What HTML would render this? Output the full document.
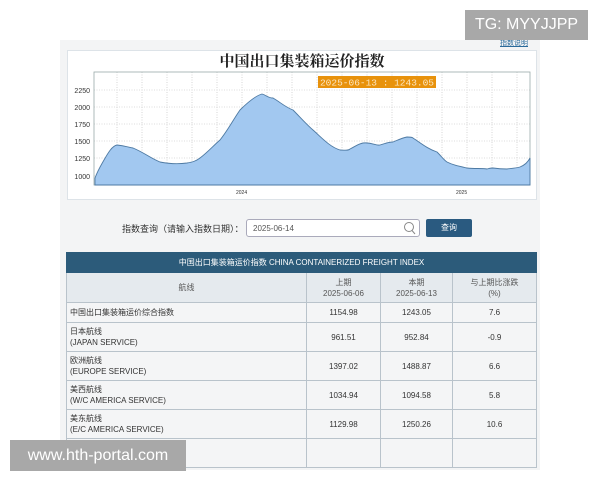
<!DOCTYPE html>
<html><head><meta charset="utf-8"><style>
*{margin:0;padding:0;box-sizing:border-box}
body{width:600px;height:480px;background:#fff;position:relative;overflow:hidden;font-family:"Liberation Sans","Noto Sans CJK SC",sans-serif;}
.abs{position:absolute}
.wrap{left:60px;top:40px;width:480px;height:440px;background:#f3f4f5}
.chart{left:67px;top:50px;width:470px;height:150px;background:#fff;border:1px solid #dde3e8}
table{position:absolute;left:66px;top:252px;width:471px;border-collapse:collapse;font-size:8px;color:#333;background:#f4f5f6}
td,th{border:1px solid #b9c3cb;font-weight:normal}
.hd td{background:#2c5b7a;color:#fff;text-align:center;height:20px;border-color:#2c5b7a}
.ch td{background:#e5eaee;color:#555;text-align:center;height:30px;line-height:11px}
.r td{height:29px;line-height:11px}
.r1 td{height:20px;line-height:11px}
td.n{text-align:center}
td.l{padding-left:3px}
</style></head><body>
<div class="abs wrap"></div>
<div class="abs" style="left:500px;top:38px;font-size:7px;color:#2a6a9a;text-decoration:underline">指数说明</div>
<div class="abs chart"></div>
<div class="abs" style="left:67px;top:50px;width:470px;text-align:center;font-size:15px;font-weight:bold;color:#222;font-family:'Liberation Serif','Noto Serif CJK SC',serif">中国出口集装箱运价指数</div>
<svg class="abs" style="left:0;top:0" width="600" height="210">
<g stroke="#bbb" stroke-dasharray="1,1.5" stroke-width="0.6">
<line x1="94" x2="530" y1="90" y2="90"/><line x1="94" x2="530" y1="107" y2="107"/><line x1="94" x2="530" y1="124" y2="124"/><line x1="94" x2="530" y1="141" y2="141"/><line x1="94" x2="530" y1="158" y2="158"/><line x1="94" x2="530" y1="176" y2="176"/>
<line x1="117" x2="117" y1="72" y2="185"/><line x1="142" x2="142" y1="72" y2="185"/><line x1="167" x2="167" y1="72" y2="185"/><line x1="192" x2="192" y1="72" y2="185"/><line x1="217" x2="217" y1="72" y2="185"/><line x1="242" x2="242" y1="72" y2="185"/><line x1="267" x2="267" y1="72" y2="185"/><line x1="292" x2="292" y1="72" y2="185"/><line x1="317" x2="317" y1="72" y2="185"/><line x1="342" x2="342" y1="72" y2="185"/><line x1="367" x2="367" y1="72" y2="185"/><line x1="392" x2="392" y1="72" y2="185"/><line x1="417" x2="417" y1="72" y2="185"/><line x1="442" x2="442" y1="72" y2="185"/><line x1="467" x2="467" y1="72" y2="185"/><line x1="492" x2="492" y1="72" y2="185"/><line x1="517" x2="517" y1="72" y2="185"/>
</g>
<rect x="94" y="72" width="436" height="113" fill="none" stroke="#9aa" stroke-width="0.8"/>
<path d="M95,185 L95,178 C98,170 100,167 104,160 C108,153 112,146 117,145 C125,146 128,147 133,148 C145,153 150,158 160,162 C170,164 180,164 187,163 C193,162 196,161 200,158 C208,152 213,146 220,140 C228,130 233,120 240,110 C248,102 255,96 262,94 C266,95 268,98 273,98 C280,102 285,107 293,110 C300,117 306,124 313,130 C322,138 330,147 340,150 C345,150 348,151 350,149 C356,146 358,144 363,143 C372,142 376,146 380,145 C386,143 389,142 393,142 C398,140 402,138 407,137 C410,137 412,137 413,138 C422,144 428,149 437,152 C442,157 444,160 447,162 C453,165 458,166 467,168 C475,169 481,168 487,169 C490,168 491,168 493,168 C500,169 503,169 507,169 C513,168 517,168 520,167 C525,165 528,162 530,158 L530,185 Z" fill="#a2c8f0" stroke="#4e7aa3" stroke-width="0.9"/>
<g font-size="7" fill="#333" text-anchor="end" font-family="Liberation Sans"><text x="90" y="93">2250</text><text x="90" y="110">2000</text><text x="90" y="127">1750</text><text x="90" y="144">1500</text><text x="90" y="161">1250</text><text x="90" y="179">1000</text></g>
<g font-size="5" fill="#333" font-family="Liberation Sans"><text x="236" y="194">2024</text><text x="456" y="194">2025</text></g>
<rect x="318" y="76" width="118" height="12" fill="#e8920c"/>
<text x="377" y="85.5" font-size="9.5" fill="#fbe6c0" text-anchor="middle" font-family="Liberation Mono">2025-06-13 : 1243.05</text>
</svg>
<div class="abs" style="left:122px;top:222px;font-size:9px;color:#333">指数查询（请输入指数日期）：</div>
<div class="abs" style="left:246px;top:219px;width:174px;height:18px;border:1px solid #aab;border-radius:3px;background:#fff;font-size:8px;color:#555;padding:4px 6px">2025-06-14</div>
<svg class="abs" style="left:402px;top:221px" width="14" height="14"><circle cx="7" cy="6" r="4.5" fill="none" stroke="#888" stroke-width="1"/><line x1="10" y1="9.5" x2="13" y2="13" stroke="#888"/></svg>
<div class="abs" style="left:426px;top:219px;width:46px;height:18px;background:#2a5a80;border-radius:2px;color:#fff;font-size:8px;text-align:center;line-height:18px">查询</div>
<table>
<tr class="hd"><td colspan="4">中国出口集装箱运价指数 CHINA CONTAINERIZED FREIGHT INDEX</td></tr>
<tr class="ch"><td style="width:240px">航线</td><td style="width:74px">上期<br>2025-06-06</td><td style="width:72px">本期<br>2025-06-13</td><td>与上期比涨跌<br>(%)</td></tr>
<tr class="r1"><td class="l">中国出口集装箱运价综合指数</td><td class="n">1154.98</td><td class="n">1243.05</td><td class="n">7.6</td></tr>
<tr class="r"><td class="l">日本航线<br>(JAPAN SERVICE)</td><td class="n">961.51</td><td class="n">952.84</td><td class="n">-0.9</td></tr>
<tr class="r"><td class="l">欧洲航线<br>(EUROPE SERVICE)</td><td class="n">1397.02</td><td class="n">1488.87</td><td class="n">6.6</td></tr>
<tr class="r"><td class="l">美西航线<br>(W/C AMERICA SERVICE)</td><td class="n">1034.94</td><td class="n">1094.58</td><td class="n">5.8</td></tr>
<tr class="r"><td class="l">美东航线<br>(E/C AMERICA SERVICE)</td><td class="n">1129.98</td><td class="n">1250.26</td><td class="n">10.6</td></tr>
<tr class="r"><td class="l">&nbsp;</td><td></td><td></td><td></td></tr>
</table>
<div class="abs" style="left:0;top:470px;width:600px;height:10px;background:#fff"></div>
<div class="abs" style="left:465px;top:10px;width:123px;height:30px;background:#a8a8a8;color:#fff;font-size:16px;text-align:center;line-height:30px">TG: MYYJJPP</div>
<div class="abs" style="left:10px;top:440px;width:176px;height:31px;background:#a8a8a8;color:#fff;font-size:16px;text-align:center;line-height:31px">www.hth-portal.com</div>
</body></html>
